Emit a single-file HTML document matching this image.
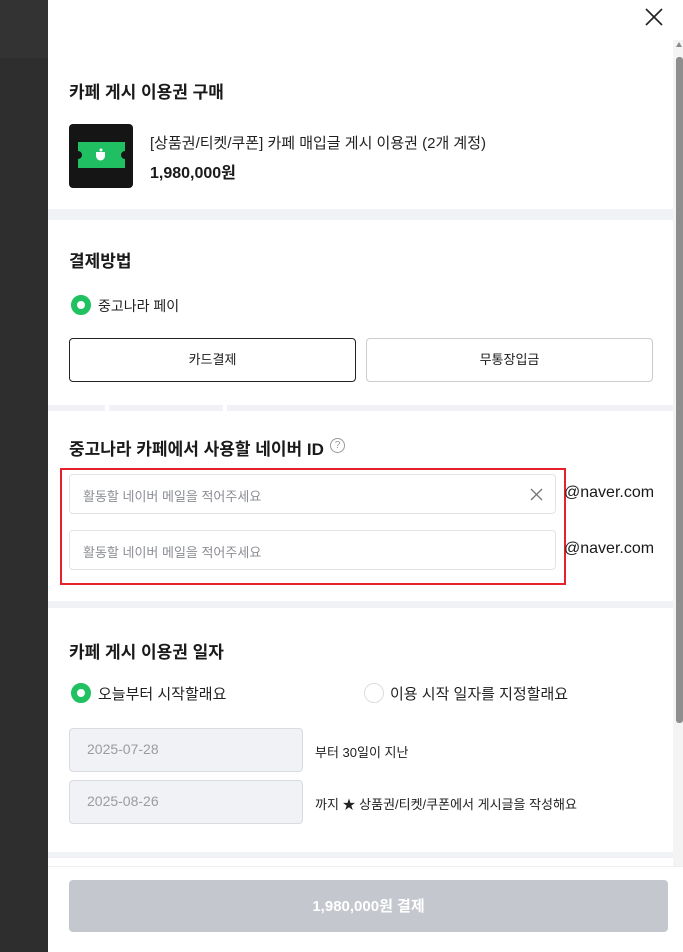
<!DOCTYPE html>
<html><head><meta charset="utf-8"><style>
*{margin:0;padding:0;box-sizing:border-box}
body{width:683px;height:952px;overflow:hidden;position:relative;background:#fff;font-family:"Liberation Sans","Noto Sans CJK KR",sans-serif;color:#1a1a1a}
.a{position:absolute}
.sep{position:absolute;left:48px;width:625px;background:#f0f2f5}
.h{font-size:17px;font-weight:bold;color:#1a1a1a}
.t{font-size:14px;color:#222}
.inp{position:absolute;left:69px;width:487px;height:40px;border:1px solid #e1e3e6;border-radius:4px;font-size:13px;color:#8a8d93;padding:11px 13px}
.date{position:absolute;left:69px;width:234px;height:44px;border:1px solid #d8dbe0;background:#f0f2f5;border-radius:4px;font-size:14px;color:#9a9ca1;padding:12px 17px}
.radio{position:absolute;width:20px;height:20px;border-radius:50%}
</style></head><body>
<div class="a" style="left:0;top:0;width:48px;height:58px;background:#333"></div>
<div class="a" style="left:0;top:58px;width:48px;height:894px;background:#2e2e2e"></div>
<svg class="a" style="left:644px;top:7px" width="20" height="20" viewBox="0 0 20 20"><path d="M2 2L18 18M18 2L2 18" stroke="#222" stroke-width="1.6"/></svg>
<div class="a" style="left:673px;top:40px;width:10px;height:826px;background:#f4f4f4"></div>
<div class="a" style="left:676px;top:42px;width:0;height:0;border-left:3.5px solid transparent;border-right:3.5px solid transparent;border-bottom:5px solid #8a8a8a"></div>
<div class="a" style="left:676px;top:57px;width:7px;height:666px;background:#8e8e8e;border-radius:3px"></div>

<div class="a h" style="left:69px;top:78px">카페 게시 이용권 구매</div>
<div class="a" style="left:69px;top:124px;width:64px;height:64px;background:#151515;border-radius:4px"></div>
<svg class="a" style="left:78px;top:142px" width="47" height="26" viewBox="0 0 47 26"><path d="M0 0H47V9A4 4 0 0 0 47 17V26H0V17A4 4 0 0 0 0 9Z" fill="#1fbf62"/><path d="M18 10h9v4a4.5 4.5 0 0 1-9 0z" fill="#fff"/><circle cx="23" cy="8" r="1.5" fill="#fff"/></svg>
<div class="a" style="left:150px;top:132px;font-size:15px;color:#222">[상품권/티켓/쿠폰] 카페 매입글 게시 이용권 (2개 계정)</div>
<div class="a" style="left:150px;top:159px;font-size:16px;font-weight:bold">1,980,000원</div>

<div class="sep" style="top:209px;height:11px"></div>
<div class="a h" style="left:69px;top:247px">결제방법</div>
<div class="radio" style="left:71px;top:295px;border:6px solid #1fc160;background:#fff"></div>
<div class="a t" style="left:98px;top:296px">중고나라 페이</div>
<div class="a" style="left:69px;top:338px;width:287px;height:44px;border:1.3px solid #222;border-radius:4px;font-size:13px;text-align:center;line-height:42px">카드결제</div>
<div class="a" style="left:366px;top:338px;width:287px;height:44px;border:1px solid #c9ccd1;border-radius:4px;font-size:13px;text-align:center;line-height:42px">무통장입금</div>

<div class="sep" style="top:405px;height:6px"></div>
<div class="a" style="left:105px;top:405px;width:4px;height:6px;background:#fff"></div>
<div class="a" style="left:223px;top:405px;width:4px;height:6px;background:#fff"></div>
<div class="a h" style="left:69px;top:435px">중고나라 카페에서 사용할 네이버 ID</div>
<div class="a" style="left:330px;top:438px;width:15px;height:15px;border:1.2px solid #999;border-radius:50%;font-size:10px;color:#999;text-align:center;line-height:13px">?</div>
<div class="a" style="left:60px;top:468px;width:506px;height:117px;border:2.5px solid #e8202e"></div>
<div class="inp" style="top:474px">활동할 네이버 메일을 적어주세요</div>
<svg class="a" style="left:530px;top:488px" width="13" height="13" viewBox="0 0 13 13"><path d="M1 1L12 12M12 1L1 12" stroke="#777" stroke-width="1.3"/></svg>
<div class="inp" style="top:530px">활동할 네이버 메일을 적어주세요</div>
<div class="a" style="left:564px;top:484px;font-size:16px">@naver.com</div>
<div class="a" style="left:564px;top:540px;font-size:16px">@naver.com</div>

<div class="sep" style="top:601px;height:7px"></div>
<div class="a h" style="left:69px;top:638px">카페 게시 이용권 일자</div>
<div class="radio" style="left:71px;top:683px;border:6px solid #1fc160;background:#fff"></div>
<div class="a" style="left:98px;top:683px;font-size:15px;color:#222">오늘부터 시작할래요</div>
<div class="radio" style="left:364px;top:683px;border:1.5px solid #ddd;background:#fff"></div>
<div class="a" style="left:390px;top:683px;font-size:15px;color:#222">이용 시작 일자를 지정할래요</div>
<div class="date" style="top:728px">2025-07-28</div>
<div class="a" style="left:315px;top:742px;font-size:13px;color:#222">부터 30일이 지난</div>
<div class="date" style="top:780px">2025-08-26</div>
<div class="a" style="left:315px;top:794px;font-size:13px;color:#222">까지 ★ 상품권/티켓/쿠폰에서 게시글을 작성해요</div>

<div class="sep" style="top:852px;height:6px"></div>
<div class="a" style="left:48px;top:866px;width:635px;height:1px;background:#eee"></div>
<div class="a" style="left:69px;top:880px;width:599px;height:52px;background:#c4c7cd;border-radius:4px;color:#fff;font-size:15px;font-weight:bold;text-align:center;line-height:54px">1,980,000원 결제</div>
</body></html>
